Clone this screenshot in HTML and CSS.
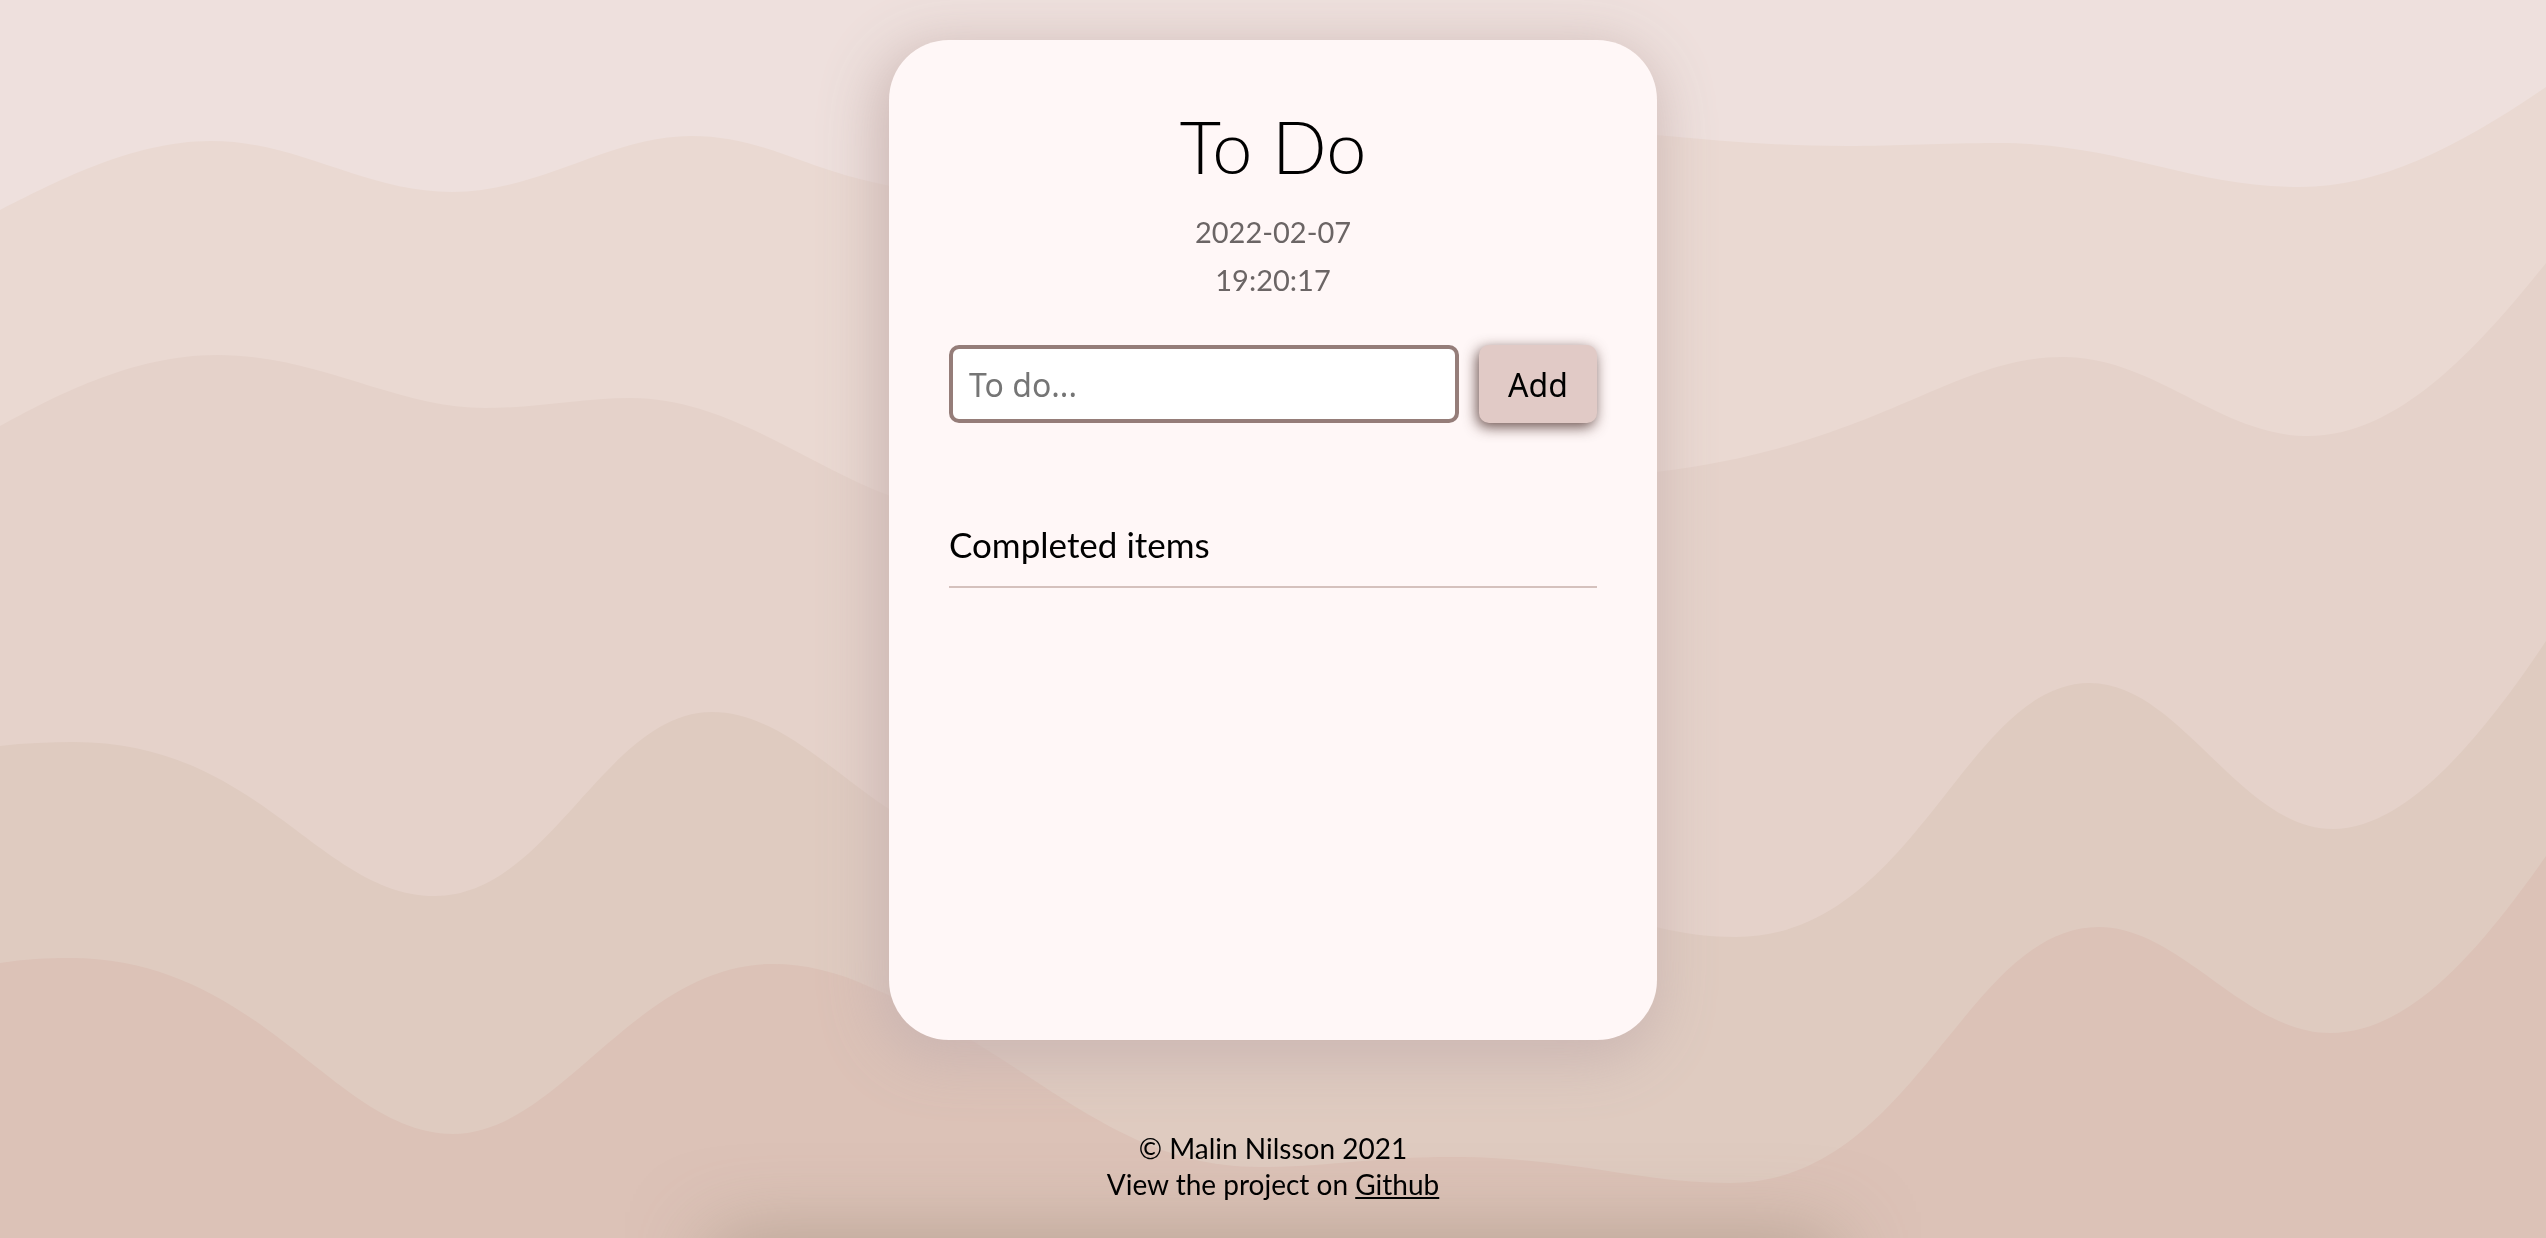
FILE: index.html
```html
<!DOCTYPE html>
<html lang="en">
<head>
<meta charset="utf-8">
<meta name="viewport" content="width=device-width, initial-scale=1">
<title>To Do</title>
<link rel="stylesheet" href="styles.css">
</head>
<body>
<svg class="waves" viewBox="0 0 2546 1238" preserveAspectRatio="none" aria-hidden="true">
<path fill="#ead9d2" d="M0 210C50 185 130 141 211 141C300 141 363 192 452 192C540 192 610 136 691 136C760 136 800 166 872 182C1040 222 1180 200 1290 160C1400 124 1560 125 1656 135C1720 141 1780 146 1847 146C1900 146 1940 143 1998 143C2120 143 2190 187 2300 187C2380 187 2460 146 2546 87V1238H0Z"/>
<path fill="#e5d2ca" d="M0 426C50 399 130 355 217 355C320 355 395 408 485 408C540 408 580 398 631 398C720 398 795 456 875 490C1020 550 1180 500 1320 490C1440 478 1540 488 1656 472C1880 445 1950 357 2063 357C2155 357 2220 436 2308 436C2400 436 2480 345 2546 263V1238H0Z"/>
<path fill="#dfcbc0" d="M0 746C25 743 50 742 74 742C260 742 320 896 435 896C550 896 605 712 712 712C770 712 820 760 877 801C990 880 1180 860 1350 850C1480 845 1570 905 1656 927C1685 934 1710 937 1736 937C1915 937 1965 683 2090 683C2180 683 2240 829 2333 829C2405 829 2480 740 2546 641V1238H0Z"/>
<path fill="#dcc2b7" d="M0 963C25 959 47 958 70 958C262 958 335 1134 453 1134C560 1134 635 964 773 964C805 964 838 972 870 987C1030 1055 1110 1167 1259 1167C1330 1167 1370 1157 1453 1157C1570 1157 1640 1183 1730 1183C1915 1183 1965 927 2099 927C2180 927 2245 1033 2330 1033C2410 1033 2480 950 2546 856V1238H0Z"/>
</svg>
<div class="page">
<main class="card">
<h1 class="title">To Do</h1>
<p class="clock"><time>2022-02-07</time><time>19:20:17</time></p>
<form class="add-form">
<input class="add-input" type="text" placeholder="To do..." aria-label="New to do">
<button class="add-button" type="button">Add</button>
</form>
<h2 class="section-title">Completed items</h2>
</main>
<footer class="footer">
<p>© Malin Nilsson 2021</p>
<p>View the project on <a class="footer-link" href="#">Github</a></p>
</footer>
</div>
</body>
</html>
```
FILE: styles.css
```css
* {
  box-sizing: border-box;
}

body {
  margin: 0;
  font-family: Lato, sans-serif;
  color: #000;
  background: #eee0dd;
}

h1, h2, p {
  margin: 0;
}

.waves {
  position: fixed;
  inset: 0;
  width: 100%;
  height: 100%;
}

.page {
  position: relative;
  min-height: 100vh;
  overflow: hidden;
  padding: 40px 20px 36px;
  display: flex;
  flex-direction: column;
  align-items: center;
  gap: 90px;
}

/* soft shade rising from the bottom edge */
.page::after {
  content: "";
  position: absolute;
  top: 100%;
  left: 28%;
  right: 28%;
  height: 80px;
  box-shadow: 0 0 80px rgba(140, 125, 105, 0.5);
}

.card {
  width: 100%;
  max-width: 768px;
  flex: 1;
  padding: 60px;
  border-radius: 60px;
  background: #fff7f7;
  box-shadow: -6px 14px 54px 8px rgba(202, 181, 177, 0.9);
}

.title {
  font-size: 72px;
  line-height: 92px;
  font-weight: 300;
  text-align: center;
}

.clock {
  display: flex;
  flex-direction: column;
  align-items: center;
  margin-top: 16px;
  font-size: 29px;
  line-height: 48px;
  color: #6b6565;
}

.add-form {
  display: flex;
  gap: 20px;
  margin-top: 41px;
}

.add-input {
  flex: 1;
  min-width: 0;
  height: 78px;
  padding: 0 16px;
  border: 4px solid #957d79;
  border-radius: 10px;
  background: #fff;
  font: 32px "Noto Sans", sans-serif;
}

.add-input::placeholder {
  color: #757575;
}

.add-button {
  width: 118px;
  height: 78px;
  padding: 0;
  border: 0;
  border-radius: 10px;
  background: #e1cac6;
  color: #000;
  font: 32px "Noto Sans", sans-serif;
  box-shadow: -2px 4px 14px rgba(70, 40, 35, 0.8);
}

.section-title {
  margin-top: 95px;
  padding-bottom: 16px;
  border-bottom: 2px solid #d5c1bd;
  font-size: 35px;
  line-height: 52px;
  font-weight: 400;
}

.footer {
  position: relative;
  z-index: 1;
  font-size: 28px;
  line-height: 36px;
  text-align: center;
}

.footer-link {
  color: inherit;
}
```
